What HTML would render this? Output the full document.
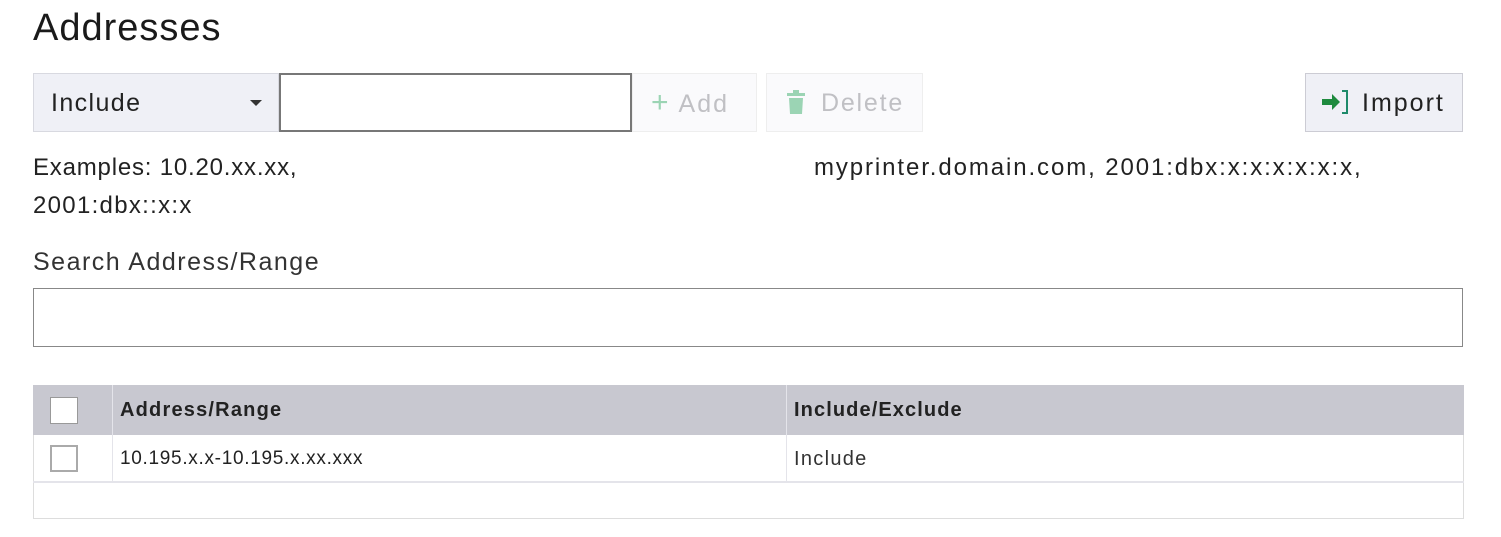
<!DOCTYPE html>
<html><head><style>
body{margin:0;background:#fff;font-family:"Liberation Sans",sans-serif;color:#222;width:1501px;height:537px;overflow:hidden;position:relative}
.a{position:absolute;box-sizing:border-box}
</style></head><body>
<div class="a" style="left:33px;top:7px;font-size:38px;letter-spacing:1px;color:#1a1a1a">Addresses</div>
<div class="a" style="left:33px;top:73px;width:246px;height:59px;background:#eff0f6;border:1px solid #d8d9e0;font-size:25px;letter-spacing:1.4px;padding:15px 0 0 17px">Include<span style="position:absolute;left:216px;top:26px;width:0;height:0;border-left:6px solid transparent;border-right:6px solid transparent;border-top:6px solid #333"></span></div>
<div class="a" style="left:279px;top:73px;width:353px;height:59px;border:2px solid #777;background:#fff"></div>
<div class="a" style="left:632px;top:73px;width:125px;height:59px;background:#fafafc;border:1px solid #eee;font-size:25px;letter-spacing:2px;color:#c0c0c4;padding:15px 0 0 18px;line-height:28px"><span style="color:#9bd4b4;font-size:30px;margin-right:8px">+</span>Add</div>
<div class="a" style="left:766px;top:73px;width:157px;height:59px;background:#fafafc;border:1px solid #eee;font-size:25px;letter-spacing:1.8px;color:#c0c0c4;padding:15px 0 0 20px"><svg width="18" height="24" viewBox="0 0 18 24" style="vertical-align:-3px;margin-right:16px"><rect x="0" y="3" width="18" height="3" fill="#9bd4b4"/><rect x="6" y="0" width="6" height="3" fill="#9bd4b4"/><path d="M2 8H16L15 24H3Z" fill="#9bd4b4"/></svg>Delete</div>
<div class="a" style="left:1305px;top:73px;width:158px;height:59px;background:#eff0f6;border:1px solid #ccccd4;font-size:25px;letter-spacing:2px;padding:15px 0 0 16px"><svg width="30" height="24" viewBox="0 0 30 24" style="vertical-align:-3px;margin-right:10px"><path d="M0 9H10V4L18 12L10 20V15H0Z" fill="#1e8a3e"/><path d="M20 1H25V23H20" fill="none" stroke="#1e8a6a" stroke-width="2"/></svg>Import</div>
<div class="a" style="left:33px;top:154px;font-size:24px;letter-spacing:0.8px;color:#222">Examples: 10.20.xx.xx,</div>
<div class="a" style="left:814px;top:154px;font-size:24px;letter-spacing:1.9px;color:#222">myprinter.domain.com, 2001:dbx:x:x:x:x:x:x,</div>
<div class="a" style="left:33px;top:192px;font-size:24px;letter-spacing:1.3px;color:#222">2001:dbx::x:x</div>
<div class="a" style="left:33px;top:248px;font-size:25px;letter-spacing:1.5px;color:#333">Search Address/Range</div>
<div class="a" style="left:33px;top:288px;width:1430px;height:59px;border:1px solid #888"></div>
<div class="a" style="left:33px;top:385px;width:1431px;height:134px;border:1px solid #ddd"></div>
<div class="a" style="left:33px;top:385px;width:1431px;height:50px;background:#c8c8d0"></div>
<div class="a" style="left:112px;top:385px;width:1px;height:97px;background:#e4e4ea"></div>
<div class="a" style="left:786px;top:385px;width:1px;height:97px;background:#e4e4ea"></div>
<div class="a" style="left:33px;top:481px;width:1431px;height:2px;background:#e4e4ea"></div>
<div class="a" style="left:50px;top:397px;width:28px;height:27px;background:#fff;border:1px solid #999"></div>
<div class="a" style="left:50px;top:445px;width:28px;height:27px;background:#fff;border:2px solid #aaa"></div>
<div class="a" style="left:120px;top:399px;font-size:20px;letter-spacing:1.2px;font-weight:bold;color:#222">Address/Range</div>
<div class="a" style="left:794px;top:399px;font-size:20px;letter-spacing:1.1px;font-weight:bold;color:#222">Include/Exclude</div>
<div class="a" style="left:120px;top:448px;font-size:19px;letter-spacing:0.7px;color:#222">10.195.x.x-10.195.x.xx.xxx</div>
<div class="a" style="left:794px;top:448px;font-size:20px;letter-spacing:1.3px;color:#333">Include</div>
</body></html>
